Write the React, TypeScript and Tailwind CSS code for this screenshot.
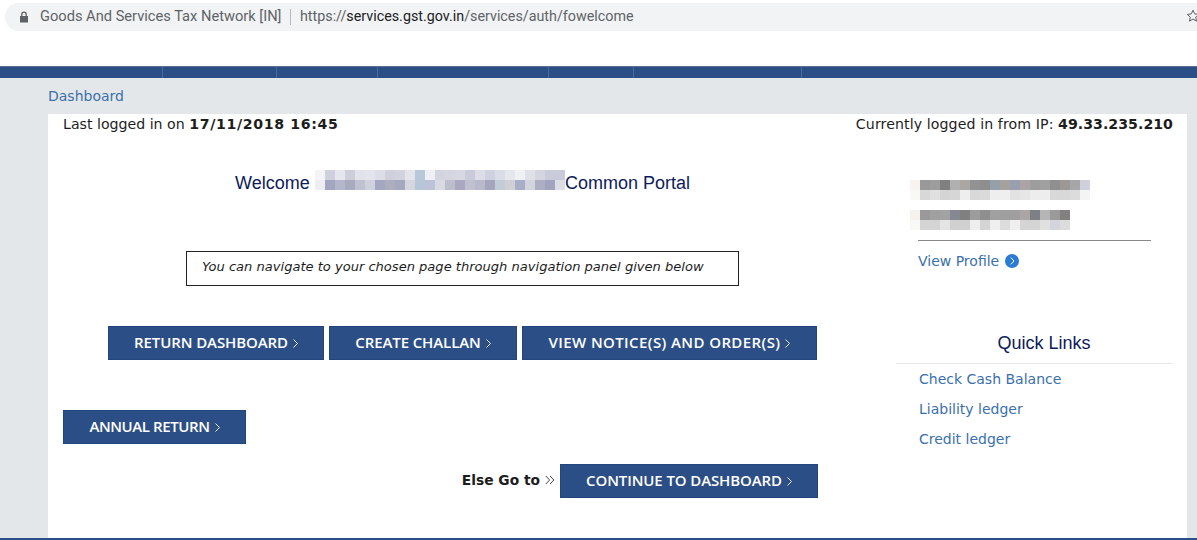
import React from "react";

const navSeparators = [163, 114, 101, 171, 85, 168];

const welcomeBlur = [
  ["#f4f4f8", "#cfd0de", "#e6e7ee", "#cdced9", "#e2e3ea", "#e4e5ec", "#dcdde6", "#cfd0db", "#d2d3de", "#e4e5ea", "#b9c7da", "#eef0f5", "#d2d4e0", "#d5d6e0", "#d8d8e2", "#c9cbda", "#dcdde8", "#cfd1df", "#d8dde8", "#e6e7ec", "#f0f1f4", "#e0e1e8", "#d4d5e0", "#cacbda", "#cacbda"],
  ["#eeeef2", "#a2a6c0", "#b3b6cc", "#a8aabf", "#c0c2d4", "#cfd1dc", "#a3a7c2", "#acaec0", "#a5a9bf", "#d5d6de", "#b6c5d8", "#bcc3d8", "#d8dae2", "#bcbece", "#aaa8c0", "#c0c0d0", "#b8bacc", "#a5a5bd", "#c4ccd8", "#ced0d6", "#a9aec8", "#d2d4de", "#adaec2", "#a2a4bf", "#dcdee6"],
];

const profileBlurTop = [
  ["#f7f3f0", "#999999", "#9d9d9d", "#808080", "#b0b0b0", "#aaa6a4", "#929292", "#8e8e8e", "#96a0aa", "#a5a19c", "#9a9fb0", "#aaa4a6", "#9d9d9d", "#a0a0a0", "#8f8f8f", "#9c9896", "#a6a6a8", "#d0d0dc"],
  ["#f8f8f6", "#d8d8d8", "#e0e0e0", "#d4d4d4", "#d6d6d6", "#eeeeee", "#d8d8d8", "#dadada", "#eeeeee", "#efefef", "#e2e2e2", "#e6e6e6", "#ededed", "#ededed", "#d8d8d8", "#d8d8d8", "#dcdcdc", "#f4f4f4"],
];

const profileBlurBottom = [
  ["#f5f1ec", "#999999", "#a0a0a0", "#a2a2a2", "#858890", "#808080", "#9c9c9c", "#8f8f8f", "#a0a0a0", "#9f9f9f", "#9f9f9f", "#aaa6a6", "#7d8084", "#b5b5b8", "#9a9a9a", "#838080"],
  ["#f8f8f6", "#d4d4d4", "#d4d4d4", "#e4e4e4", "#d0d0d0", "#d0d0d0", "#eeeeee", "#d4d4d4", "#efefef", "#dcdcdc", "#efefef", "#d4d4d4", "#d4d4d4", "#e0e0e0", "#d4d4dc", "#dcdcdc"],
];

function Blur({ rows, className }: { rows: string[][]; className?: string }) {
  return (
    <div className={className}>
      {rows.map((row, i) => (
        <div key={i} className="flex">
          {row.map((color, j) => (
            <div key={j} className="w-2.5 h-2.5 shrink-0" style={{ backgroundColor: color }} />
          ))}
        </div>
      ))}
    </div>
  );
}

function ActionButton({ label, className }: { label: string; className: string }) {
  return (
    <button
      className={`h-[34px] shrink-0 pb-[2px] bg-[#2c4e86] border border-[#24457b] text-white text-[15px] font-semibold font-['Open_Sans','DejaVu_Sans',sans-serif] flex items-center justify-center gap-[5px] ${className}`}
    >
      {label}
      <svg className="mt-[2px]" width="5" height="9" viewBox="0 0 5 9" fill="none" stroke="#e8ecf4" strokeWidth="1">
        <path d="M0.5 0.5 L4.5 4.5 L0.5 8.5" />
      </svg>
    </button>
  );
}

const App: React.FC = () => {
  return (
    <div className="w-[1197px] h-[540px] overflow-hidden bg-white font-['DejaVu_Sans',sans-serif]">
      {/* Browser chrome */}
      <div className="h-[66px] bg-white pt-[3px] pl-[5px]">
        <div className="h-[28px] w-[1192px] bg-[#f1f3f4] rounded-l-[14px] flex items-center font-['Roboto',sans-serif] text-[#5f6368] relative">
          <svg className="ml-[14px]" width="10" height="12" viewBox="0 0 10 12" fill="#5f6368">
            <path d="M1 5h8v6.5H1z" />
            <path d="M2.8 5V3.4a2.2 2.2 0 0 1 4.4 0V5" fill="none" stroke="#5f6368" strokeWidth="1.3" />
          </svg>
          <span className="ml-[11px] w-[250px] whitespace-nowrap text-[14.65px]">Goods And Services Tax Network [IN]</span>
          <span className="h-[16px] w-px bg-[#b8bbbe]" />
          <span className="ml-[9px] whitespace-nowrap text-[14.3px]">
            https://<span className="text-[#202124]">services.gst.gov.in</span>/services/auth/fowelcome
          </span>
          <svg className="absolute right-[-3px] top-[6px]" width="14" height="14" viewBox="0 0 14 14" fill="none" stroke="#5f6368" strokeWidth="1">
            <path d="M7 1.2l1.7 3.7 4 .5-3 2.7.8 4L7 10.1l-3.5 2 .8-4-3-2.7 4-.5z" />
          </svg>
        </div>
      </div>

      {/* Top navigation bar */}
      <div className="h-[12px] bg-[#2c4e86] border-t border-[#5c6f8e] flex">
        {navSeparators.map((w, i) => (
          <div key={i} className="h-full border-r border-[#4b6a9c]" style={{ width: w }} />
        ))}
      </div>

      {/* Page body */}
      <div className="h-[462px] bg-[#e4e7ea] pl-[48px] pr-[10px] flex flex-col">
        <div className="h-[36px] pt-[9px] text-[14px] leading-[18px] text-[#3a70ad]">Dashboard</div>

        <div className="h-[424px] bg-white">
          <div className="flex justify-between pl-[15px] pr-[14px] h-[20px] text-[14.15px] leading-[20px] text-[#1d1d1d]">
            <div>
              Last logged in on <b className="tracking-[0.65px]">17/11/2018 16:45</b>
            </div>
            <div className="tracking-[0.1px]">
              Currently logged in from IP: <b className="tracking-[0.03px]">49.33.235.210</b>
            </div>
          </div>

          <div className="flex">
            {/* Main column */}
            <div className="w-[830px] shrink-0">
              <div className="mt-[36px] ml-[187px] h-[20px] flex items-center font-['Liberation_Sans',sans-serif] text-[18px] text-[#0d1b5c]">
                <span className="w-[80px] pt-[6px]">Welcome</span>
                <Blur rows={welcomeBlur} />
                <span className="pt-[6px]">Common Portal</span>
              </div>

              <div className="mt-[61px] ml-[138px] w-[553px] h-[35px] border border-[#222] pl-[15px] pb-[3px] flex items-center italic text-[13.05px] text-[#1d1d1d]">
                You can navigate to your chosen page through navigation panel given below
              </div>

              <div className="mt-[40px] ml-[60px] flex gap-[5px]">
                <ActionButton label="RETURN DASHBOARD" className="w-[216px] tracking-[-0.1px]" />
                <ActionButton label="CREATE CHALLAN" className="w-[188px] tracking-[-0.1px]" />
                <ActionButton label="VIEW NOTICE(S) AND ORDER(S)" className="w-[295px] tracking-[0.4px]" />
              </div>

              <div className="mt-[50px] ml-[15px] flex">
                <ActionButton label="ANNUAL RETURN" className="w-[183px] tracking-[-0.4px]" />
              </div>

              <div className="mt-[20px] ml-[512px] w-[258px] flex relative">
                <div className="absolute right-[263px] top-[7px] whitespace-nowrap text-[13.8px] font-bold leading-[18px] text-[#1d1d1d] flex items-center gap-[5px]">
                  Else Go to
                  <svg width="10" height="10" viewBox="0 0 10 10" fill="none" stroke="#444" strokeWidth="1">
                    <path d="M0.8 1L4.6 5L0.8 9M5 1L8.8 5L5 9" />
                  </svg>
                </div>
                <ActionButton label="CONTINUE TO DASHBOARD" className="w-[258px] tracking-[-0.1px]" />
              </div>
            </div>

            {/* Right column */}
            <div className="w-[277px] ml-[18px] shrink-0">
              <Blur rows={profileBlurTop} className="mt-[46px] ml-[14px]" />
              <Blur rows={profileBlurBottom} className="mt-[10px] ml-[14px]" />
              <div className="mt-[10px] ml-[22px] w-[233px] border-t border-[#888]" />
              <div className="mt-[11px] ml-[22px] flex items-center gap-[6px] h-[18px] text-[14px] text-[#3a70ad]">
                View Profile
                <span className="w-[14px] h-[14px] rounded-full bg-[#2a7bd4] flex items-center justify-center">
                  <svg width="5" height="8" viewBox="0 0 5 8" fill="none" stroke="#fff" strokeWidth="1">
                    <path d="M0.8 0.6L4 4L0.8 7.4" />
                  </svg>
                </span>
              </div>

              <div className="mt-[61px] text-center pl-[19px] h-[24px] leading-[24px] font-['Liberation_Sans',sans-serif] text-[18px] text-[#0d1b5c]">
                Quick Links
              </div>
              <div className="mt-[8px] border-t border-[#e8e8e8]" />
              <div className="mt-[6px] ml-[23px] flex flex-col gap-[12px] text-[14px] leading-[18px] text-[#3a70ad]">
                <div>Check Cash Balance</div>
                <div>Liability ledger</div>
                <div>Credit ledger</div>
              </div>
            </div>
          </div>
        </div>
      </div>
      <div className="h-[2px] bg-[#2c4e86] -mt-[2px] relative" />
    </div>
  );
};

export default App;
